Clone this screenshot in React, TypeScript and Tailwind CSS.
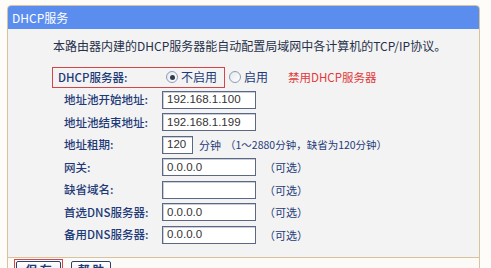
import React from "react";

const cjk = "font-['Noto_Sans_CJK_SC','Noto_Sans',sans-serif]";

function Radio({ checked }: { checked?: boolean }) {
  return (
    <span className="flex h-[12px] w-[12px] items-center justify-center rounded-full border border-[#8d9bb3] bg-gradient-to-br from-[#e4e8ee] to-white">
      {checked && <span className="h-[5px] w-[5px] rounded-full bg-[#2d3b55]" />}
    </span>
  );
}

function Field({ value = "", wide = true }: { value?: string; wide?: boolean }) {
  return (
    <div
      className={`flex h-[18px] items-center border border-[#5b6884] bg-white pl-[4px] font-['Liberation_Sans',sans-serif] text-[11.5px] text-[#333] shadow-[inset_1px_1px_0_#c9ced8] ${
        wide ? "w-[94px]" : "w-[31px]"
      }`}
    >
      {value}
    </div>
  );
}

function Row({ label, children }: { label: string; children: React.ReactNode }) {
  return (
    <div className="flex h-[22.5px] items-center pl-[50px]">
      <div className="w-[104px] pl-[6px] text-[11.5px] font-medium text-[#1e3a78]">{label}</div>
      {children}
    </div>
  );
}

const Optional = () => (
  <span className="ml-[8px] text-[11px] text-[#1e3a78]">（可选）</span>
);

export default function App() {
  return (
    <div className={`h-[268px] w-[491px] overflow-hidden bg-[#fdfcf9] pl-[7px] pt-[5px] ${cjk}`}>
      <div className="w-[473px] rounded-t-[4px] border border-[#d8c39d] bg-[#f3f3f3]">
        {/* Header */}
        <div className="flex h-[23px] items-center rounded-t-[3px] bg-[#5b8def] pl-[4px] text-[12px] text-white">
          DHCP服务
        </div>

        <div className="pb-[11px] pt-[9px]">
          <p className="h-[16px] pl-[45px] text-[12px] leading-[16px] text-[#26304a]">
            本路由器内建的DHCP服务器能自动配置局域网中各计算机的TCP/IP协议。
          </p>

          <div className="mt-[12px]">
            {/* DHCP server switch */}
            <div className="flex h-[22.5px] items-center pl-[44px]">
              <div className="flex h-[21px] items-center border border-[#d2464a] pl-[5px] pr-[7px]">
                <div className="w-[104px] text-[11.5px] font-medium text-[#1e3a78]">DHCP服务器:</div>
                <span className="ml-[4px]">
                  <Radio checked />
                </span>
                <span className="ml-[3px] text-[12px] text-[#1e3a78]">不启用</span>
              </div>
              <span className="ml-[4px]">
                <Radio />
              </span>
              <span className="ml-[3px] text-[12px] text-[#1e3a78]">启用</span>
              <span className="ml-[20px] text-[11.5px] text-[#e0393c]">禁用DHCP服务器</span>
            </div>

            <Row label="地址池开始地址:">
              <Field value="192.168.1.100" />
            </Row>
            <Row label="地址池结束地址:">
              <Field value="192.168.1.199" />
            </Row>
            <Row label="地址租期:">
              <Field value="120" wide={false} />
              <span className="ml-[6px] text-[11px] text-[#1e3a78]">分钟</span>
              <span className="ml-[4px] text-[10.5px] text-[#1e3a78]">（1～2880分钟，缺省为120分钟）</span>
            </Row>
            <Row label="网关:">
              <Field value="0.0.0.0" />
              <Optional />
            </Row>
            <Row label="缺省域名:">
              <Field />
              <Optional />
            </Row>
            <Row label="首选DNS服务器:">
              <Field value="0.0.0.0" />
              <Optional />
            </Row>
            <Row label="备用DNS服务器:">
              <Field value="0.0.0.0" />
              <Optional />
            </Row>
          </div>
        </div>

        {/* Footer buttons */}
        <div className="flex h-[20px] items-start gap-[8px] border-t border-[#d8c39d] bg-[#fbfaf7] pl-[6px] pt-[1px]">
          <div className="border border-[#d2464a] p-[1px]">
            <button className="flex h-[18px] w-[45px] items-start justify-center rounded-[2px] border border-[#2d3f6a] bg-gradient-to-b from-white to-[#dbe1ec] pt-[1px] text-[12px] font-bold leading-[13px] text-[#1e3a78]">
              保 存
            </button>
          </div>
          <button className="mt-[2px] flex h-[18px] w-[40px] items-start justify-center rounded-[2px] border border-[#2d3f6a] bg-gradient-to-b from-white to-[#dbe1ec] pt-[1px] text-[12px] font-bold leading-[13px] text-[#1e3a78]">
            帮 助
          </button>
        </div>
      </div>
    </div>
  );
}
